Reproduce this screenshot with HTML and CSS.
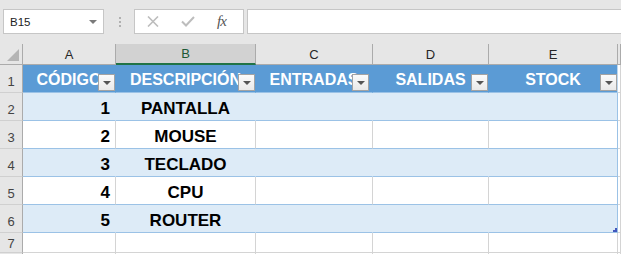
FILE: index.html
```html
<!DOCTYPE html>
<html lang="es">
<head>
  <meta charset="UTF-8">
  <title>Inventario</title>
  <link rel="stylesheet" href="styles.css">
</head>
<body>
  <div class="toolbar">
    <div class="namebox"><span>B15</span><span class="caret"></span></div>
    <div class="grip"><i></i><i></i><i></i></div>
    <div class="fxbox">
      <svg class="ico-x" width="12" height="11" viewBox="0 0 12 11"><path d="M1 0.5 L11 10.5 M11 0.5 L1 10.5" stroke="#bdbdbd" stroke-width="1.6" fill="none"/></svg>
      <svg class="ico-ok" width="14" height="11" viewBox="0 0 14 11"><path d="M1 5.5 L5 9.5 L13 1" stroke="#bdbdbd" stroke-width="2" fill="none"/></svg>
      <span class="fx">fx</span>
    </div>
    <div class="formula"></div>
  </div>

  <div class="sheet">
    <!-- cabecera de columnas -->
    <div class="corner"><span class="tri"></span></div>
    <div class="colhead">A</div>
    <div class="colhead sel">B</div>
    <div class="colhead">C</div>
    <div class="colhead">D</div>
    <div class="colhead">E</div>
    <div class="colhead"></div>

    <!-- fila 1: encabezados de la tabla -->
    <div class="rowhead">1</div>
    <div class="th">CÓDIGO<span class="filter"></span></div>
    <div class="th">DESCRIPCIÓN<span class="filter"></span></div>
    <div class="th">ENTRADAS<span class="filter gap"></span></div>
    <div class="th">SALIDAS<span class="filter"></span></div>
    <div class="th last">STOCK<span class="filter"></span></div>
    <div class="out"></div>

    <div class="rowhead">2</div>
    <div class="td band num">1</div>
    <div class="td band">PANTALLA</div>
    <div class="td band"></div>
    <div class="td band"></div>
    <div class="td band last"></div>
    <div class="out"></div>

    <div class="rowhead">3</div>
    <div class="td num">2</div>
    <div class="td">MOUSE</div>
    <div class="td"></div>
    <div class="td"></div>
    <div class="td last"></div>
    <div class="out"></div>

    <div class="rowhead">4</div>
    <div class="td band num">3</div>
    <div class="td band">TECLADO</div>
    <div class="td band"></div>
    <div class="td band"></div>
    <div class="td band last"></div>
    <div class="out"></div>

    <div class="rowhead">5</div>
    <div class="td num">4</div>
    <div class="td">CPU</div>
    <div class="td"></div>
    <div class="td"></div>
    <div class="td last"></div>
    <div class="out"></div>

    <div class="rowhead">6</div>
    <div class="td band num">5</div>
    <div class="td band">ROUTER</div>
    <div class="td band"></div>
    <div class="td band"></div>
    <div class="td band last"><span class="resize"></span></div>
    <div class="out"></div>

    <div class="rowhead short">7</div>
    <div class="cell"></div>
    <div class="cell"></div>
    <div class="cell"></div>
    <div class="cell"></div>
    <div class="cell"></div>
    <div class="cell"></div>

    <div class="rowhead"></div>
    <div class="cell"></div>
    <div class="cell"></div>
    <div class="cell"></div>
    <div class="cell"></div>
    <div class="cell"></div>
    <div class="cell"></div>
  </div>
</body>
</html>
```

FILE: styles.css
```css
body{
  margin: 0;
  padding: 0;
  width: 621px;
  height: 254px;
  overflow: hidden;
  background: #fff;
  font-family: "Liberation Sans", Arial, sans-serif;
}

/* barra de formulas */
.toolbar{
  height: 44px;
  box-sizing: border-box;
  padding-top: 9px;
  background: #e6e6e6;
  display: flex;
  align-items: flex-start;
}
.namebox{
  margin-left: 3px;
  width: 101px;
  height: 25px;
  box-sizing: border-box;
  border: 1px solid #c6c6c6;
  background: #fff;
  display: flex;
  align-items: center;
  justify-content: space-between;
  padding: 0 6px 0 6px;
  font-size: 11.5px;
  color: #222;
}
.caret{
  width: 0;
  height: 0;
  border-left: 4px solid transparent;
  border-right: 4px solid transparent;
  border-top: 4px solid #7a7a7a;
}
.grip{
  margin-left: 14px;
  width: 3px;
  height: 25px;
  display: flex;
  flex-direction: column;
  justify-content: center;
  align-items: center;
  gap: 2px;
}
.grip i{
  width: 2px;
  height: 2px;
  background: #b0b0b0;
}
.fxbox{
  margin-left: 13px;
  width: 110px;
  height: 25px;
  box-sizing: border-box;
  border: 1px solid #c6c6c6;
  background: #fff;
  display: flex;
  align-items: center;
}
.ico-x{ margin-left: 12px; }
.ico-ok{ margin-left: 22px; }
.fx{
  margin-left: 22px;
  font-family: "Liberation Serif", "Times New Roman", serif;
  font-style: italic;
  font-size: 15px;
  color: #555;
  letter-spacing: -1px;
}
.formula{
  margin-left: 3px;
  flex: 1;
  height: 25px;
  box-sizing: border-box;
  border: 1px solid #c6c6c6;
  border-right: none;
  background: #fff;
}

/* hoja */
.sheet{
  display: grid;
  grid-template-columns: 23px 93px 140px 117px 116px 129px 1fr;
  grid-template-rows: 21px repeat(6, 28px) 20px 1fr;
  height: 210px;
}
.sheet > div{
  box-sizing: border-box;
  position: relative;
  overflow: hidden;
}
.corner{
  background: #e6e6e6;
  border-right: 1px solid #ababab;
  border-bottom: 1px solid #ababab;
  display: flex;
  justify-content: flex-end;
  align-items: flex-end;
  padding: 0 3px 3px 0;
}
.tri{
  width: 12px;
  height: 12px;
  background: #b4b4b4;
  clip-path: polygon(100% 0, 100% 100%, 0 100%);
}
.colhead{
  background: #e6e6e6;
  border-right: 1px solid #ababab;
  border-bottom: 1px solid #ababab;
  display: flex;
  align-items: center;
  justify-content: center;
  font-size: 13px;
  color: #262626;
}
.colhead.sel{
  background: #d2d2d2;
  border-bottom: 2px solid #217346;
  color: #1d5a36;
}
.rowhead{
  background: #e6e6e6;
  border-right: 1px solid #ababab;
  border-bottom: 1px solid #d0d0d0;
  display: flex;
  align-items: center;
  justify-content: center;
  padding-top: 5px;
  font-size: 13px;
  color: #444;
}
.rowhead.short{
  padding-top: 1px;
}

/* tabla */
.th{
  background: #5b9bd5;
  border-right: 1px solid #5b9bd5;
  border-bottom: 1px solid #9bc2e6;
  display: flex;
  justify-content: center;
  align-items: flex-end;
  padding-bottom: 2px;
  line-height: 20px;
  font-size: 16px;
  font-weight: bold;
  color: #fff;
  white-space: nowrap;
}
.th.last{
  border-right-color: #bdd7ee;
}
.filter{
  position: absolute;
  right: 0;
  bottom: 1px;
  width: 17px;
  height: 17px;
  box-sizing: border-box;
  border: 1px solid #a3a3a3;
  background: linear-gradient(#fbfbfb, #e9e9e9);
}
.filter.gap{
  right: 3px;
}
.filter::after{
  content: "";
  position: absolute;
  left: 4px;
  top: 6px;
  border-left: 4px solid transparent;
  border-right: 4px solid transparent;
  border-top: 4px solid #555;
}
.td{
  background: #fff;
  border-right: 1px solid #d4d4d4;
  border-bottom: 1px solid #9bc2e6;
  display: flex;
  justify-content: center;
  align-items: flex-end;
  padding-bottom: 1px;
  line-height: 20px;
  font-size: 17px;
  font-weight: bold;
  color: #000;
}
.td.band{
  background: #ddebf7;
  border-right-color: #ddebf7;
}
.td.num{
  justify-content: flex-end;
  padding-right: 5px;
}
.td.last{
  border-right-color: #9bc2e6;
}
.resize{
  position: absolute;
  right: 0;
  bottom: 0;
  width: 4px;
  height: 4px;
  background: #4257bd;
  clip-path: polygon(50% 0, 100% 0, 100% 100%, 0 100%, 0 50%, 50% 50%);
}
.out, .cell{
  background: #fff;
  border-right: 1px solid #d4d4d4;
  border-bottom: 1px solid #d4d4d4;
}
```
